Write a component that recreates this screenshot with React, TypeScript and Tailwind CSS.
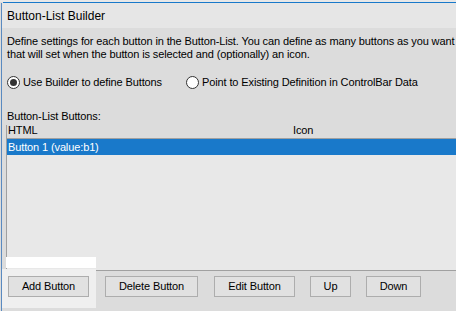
import React from "react";

function Radio({ checked, label }: { checked?: boolean; label: string }) {
  return (
    <div className="flex items-center">
      <div className="w-[13px] h-[13px] rounded-full border border-[#333333] bg-[#ffffff] flex items-center justify-center">
        {checked ? <div className="w-[7px] h-[7px] rounded-full bg-[#333333]" /> : null}
      </div>
      <span className="ml-[3px] leading-[13px]">{label}</span>
    </div>
  );
}

function Btn({ label, w, ml }: { label: string; w: string; ml: string }) {
  return (
    <div
      className={`${w} ${ml} h-[21px] border border-[#adadad] bg-[#e1e1e1] flex items-center justify-center leading-none`}
    >
      {label}
    </div>
  );
}

export default function App() {
  return (
    <div
      className="relative w-[456px] h-[311px] overflow-hidden bg-[#dcdcdc] text-[11px] tracking-[-0.12px] text-black flex flex-col"
      style={{ fontFamily: '"Liberation Sans", Arial, sans-serif' }}
    >
      <div className="absolute left-[2px] top-[269px] w-[94px] h-[39px] bg-[#efefef]" />
      <div className="relative h-[2px] bg-[#e8e8e8]" />
      <div className="relative h-[1px] bg-[#1979ca] ml-[3px]" />
      <div className="flex-1 flex flex-col border-l border-[#5a8ac0] ml-[1px]">
        <div className="h-[25px] bg-[#e6e6e6] pl-[5px] flex items-center text-[12px] tracking-normal">Button-List Builder</div>
        <div className="pl-[5px] pt-[7px] leading-[13px] whitespace-nowrap">
          <div>Define settings for each button in the Button-List. You can define as many buttons as you want to</div>
          <div>that will set when the button is selected and (optionally) an icon.</div>
        </div>
        <div className="flex items-center pl-[5px] mt-[15px] h-[13px]">
          <Radio checked label="Use Builder to define Buttons" />
          <div className="ml-[24px]">
            <Radio label="Point to Existing Definition in ControlBar Data" />
          </div>
        </div>
        <div className="pl-[5px] mt-[21px] leading-[13px]">Button-List Buttons:</div>
        <div className="ml-[4px] mt-[2px] border-l border-b border-[#a0a0a0] h-[146px] flex flex-col bg-[#e8e8e8]">
          <div className="h-[14px] bg-[#dcdcdc] flex items-end border-b border-[#a0a0a0] leading-[13px] pb-[1px]">
            <span className="pl-[1px] w-[286px]">HTML</span>
            <span>Icon</span>
          </div>
          <div className="h-[16px] bg-[#1979ca] text-white pl-[1px] flex items-center">Button 1 (value:b1)</div>
        </div>
        <div className="relative flex mt-[5px]">
          <Btn label="Add Button" w="w-[81px]" ml="ml-[6px]" />
          <Btn label="Delete Button" w="w-[93px]" ml="ml-[16px]" />
          <Btn label="Edit Button" w="w-[81px]" ml="ml-[16px]" />
          <Btn label="Up" w="w-[41px]" ml="ml-[15px]" />
          <Btn label="Down" w="w-[55px]" ml="ml-[15px]" />
        </div>
      </div>
      <div className="absolute left-[6px] top-[257px] w-[90px] h-[11px] bg-white" />
    </div>
  );
}
